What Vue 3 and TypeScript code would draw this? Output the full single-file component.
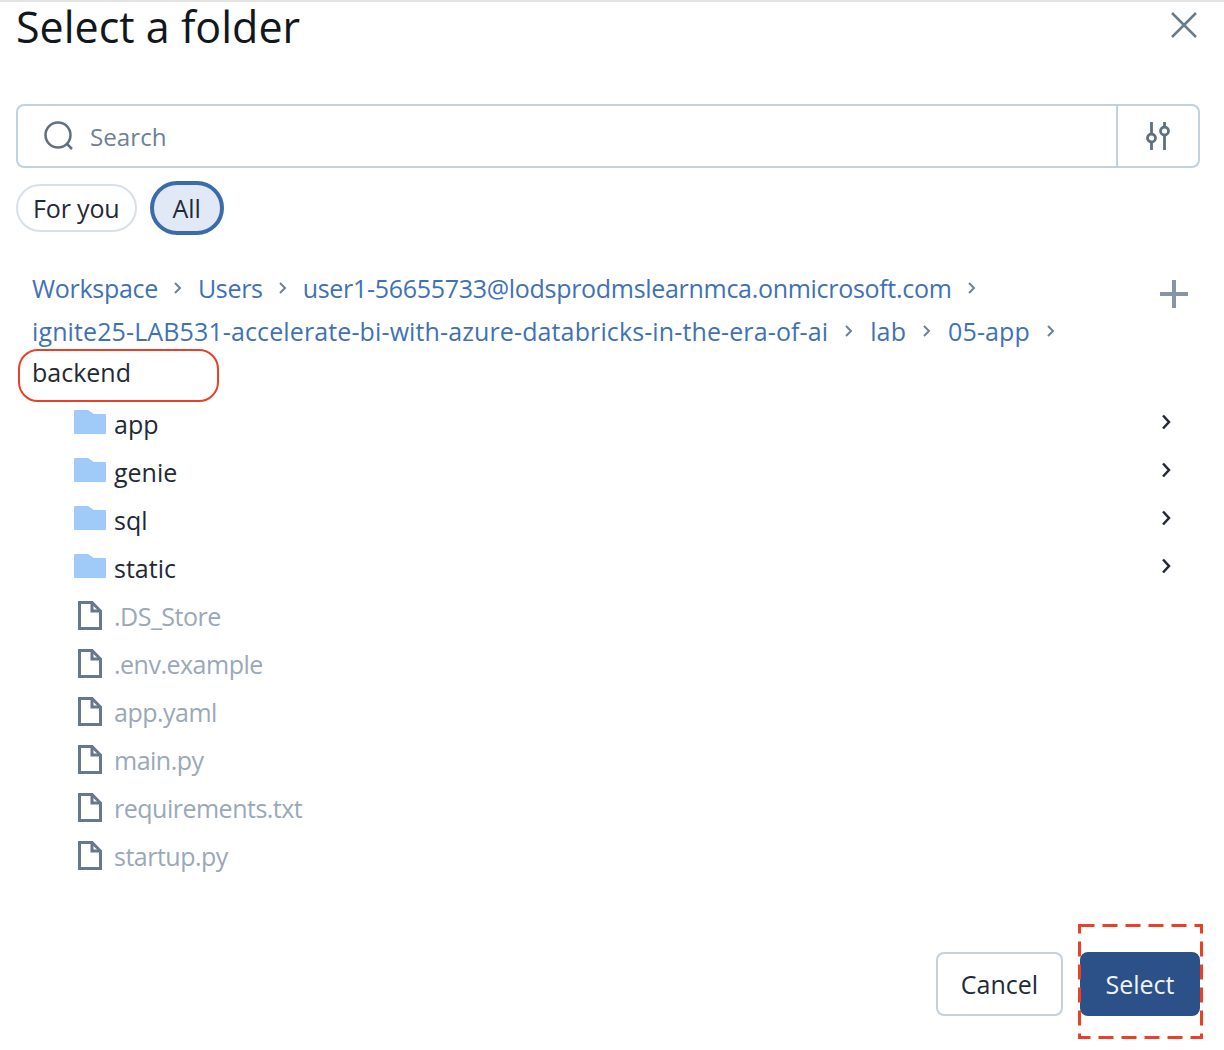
<script setup lang="ts">
const crumbs = [
  ['Workspace', 'Users', 'user1-56655733@lodsprodmslearnmca.onmicrosoft.com'],
  ['ignite25-LAB531-accelerate-bi-with-azure-databricks-in-the-era-of-ai', 'lab', '05-app'],
]
const folders = ['app', 'genie', 'sql', 'static']
const files = ['.DS_Store', '.env.example', 'app.yaml', 'main.py', 'requirements.txt', 'startup.py']
</script>

<template>
  <div class="dialog">
    <header class="head">
      <h1>Select a folder</h1>
      <svg class="close" width="28" height="28" viewBox="0 0 28 28" aria-label="Close">
        <path d="M2 2 L26 26 M26 2 L2 26" />
      </svg>
    </header>

    <div class="search">
      <div class="search-main">
        <svg width="32" height="32" viewBox="0 0 32 32">
          <circle cx="15" cy="15" r="12.5" />
          <path d="M24 24 L29 29" />
        </svg>
        <span>Search</span>
      </div>
      <div class="search-filter">
        <svg width="26" height="30" viewBox="0 0 26 30">
          <path d="M6.5 1 V13 M6.5 21 V29 M19.5 1 V6 M19.5 14 V29" />
          <circle cx="6.5" cy="17" r="4" />
          <circle cx="19.5" cy="10" r="4" />
        </svg>
      </div>
    </div>

    <div class="chips">
      <button class="chip">For you</button>
      <button class="chip active">All</button>
    </div>

    <div class="crumbs">
      <div class="crumb-lines">
        <div v-for="(line, i) in crumbs" :key="i" class="crumb-line" :class="i === 0 ? 'tight' : 'loose'">
          <template v-for="c in line" :key="c">
            <a>{{ c }}</a>
            <svg class="sep" width="10" height="14" viewBox="0 0 10 14"><path d="M2 2 L7 7 L2 12" /></svg>
          </template>
        </div>
        <div class="current">
          backend
          <span class="ring"></span>
        </div>
      </div>
      <svg class="plus" width="28" height="28" viewBox="0 0 28 28"><path d="M14 0 V28 M0 14 H28" /></svg>
    </div>

    <ul class="tree">
      <li v-for="f in folders" :key="f" class="row">
        <svg class="folder" width="32" height="24" viewBox="0 0 32 24">
          <path d="M0 1 Q0 0 1 0 H14 L20 4 H31 Q32 4 32 5 V23 Q32 24 31 24 H1 Q0 24 0 23 Z" />
        </svg>
        <span class="name">{{ f }}</span>
        <svg class="chev" width="10" height="16" viewBox="0 0 10 16"><path d="M2 1.5 L8 8 L2 14.5" /></svg>
      </li>
      <li v-for="f in files" :key="f" class="row file">
        <svg class="doc" width="32" height="30" viewBox="0 0 32 30">
          <path d="M5.5 2.5 H18 L26.5 11 V28.5 H5.5 Z" />
          <path d="M18 2.5 V11 H26.5" />
        </svg>
        <span class="name">{{ f }}</span>
      </li>
    </ul>

    <footer class="foot">
      <button class="btn">Cancel</button>
      <button class="btn primary">
        Select
        <svg class="dash" width="125" height="115" viewBox="0 0 125 115">
          <rect x="1.5" y="1.5" width="122" height="112" />
        </svg>
      </button>
    </footer>
  </div>
</template>

<style>
html, body { background: #fff; }
</style>

<style scoped>
.dialog {
  width: 1224px;
  height: 1050px;
  box-sizing: border-box;
  border-top: 2px solid #e4e4e4;
  padding: 0 24px 0 16px;
  background: #fff;
  font-family: "Open Sans", "Noto Sans", sans-serif;
  font-size: 25px;
  color: #1f2937;
  overflow: hidden;
}
.head {
  display: flex;
  justify-content: space-between;
  height: 102px;
}
h1 {
  margin: 0;
  font-size: 43px;
  line-height: 50px;
  font-weight: 400;
  color: #11171c;
}
.close { margin: 9px 2px 0 0; }
.close path { stroke: #6b7b8c; stroke-width: 2.5; fill: none; }
.search {
  display: flex;
  height: 64px;
  box-sizing: border-box;
  border: 2px solid #c3d0e0;
  border-radius: 8px;
}
.search-main {
  flex: 1;
  display: flex;
  align-items: center;
  gap: 15px;
  padding-left: 25px;
  color: #6f8194;
  font-size: 24.2px;
}
.search-main svg { fill: none; stroke: #5f7080; stroke-width: 2.5; }
.search-filter {
  width: 80px;
  border-left: 2px solid #c3d0e0;
  display: flex;
  align-items: center;
  justify-content: center;
}
.search-filter svg { fill: none; stroke: #5f7080; stroke-width: 2.8; }
.chips {
  display: flex;
  align-items: center;
  gap: 13px;
  height: 54px;
  margin-top: 13px;
}
.chip {
  font: inherit;
  height: 48px;
  padding: 0 15px;
  border: 2px solid #d8e0ea;
  border-radius: 24px;
  background: #fff;
  color: #1f2937;
  letter-spacing: -0.15px;
}
.chip.active {
  height: 54px;
  padding: 0 19px;
  border: 4px solid #3a6cad;
  border-radius: 27px;
  background: #e0e9f5;
  letter-spacing: 0;
}
.crumbs {
  display: flex;
  justify-content: space-between;
  padding: 31px 0 0 16px;
}
.crumb-line {
  display: flex;
  align-items: center;
  gap: 16px;
  height: 44px;
}
.crumb-line.tight { letter-spacing: -0.3px; gap: 15px; height: 43px; }
.crumb-line.loose { letter-spacing: 0.12px; }
.crumb-line a { color: #3f72b4; }
.sep { fill: none; stroke: #6f8194; stroke-width: 2; }
.current {
  position: relative;
  height: 38px;
  line-height: 38px;
  color: #1f2937;
}
.ring {
  position: absolute;
  left: -14px;
  top: -4px;
  width: 201px;
  height: 53px;
  box-sizing: border-box;
  border: 2px solid #e8412a;
  border-radius: 20px;
}
.plus {
  margin: 14px 12px 0 0;
}
.plus path { stroke: #8795a6; stroke-width: 4; fill: none; }
.tree {
  list-style: none;
  margin: 9px 0 0;
  padding: 0 0 0 58px;
}
.row {
  display: flex;
  align-items: center;
  gap: 8px;
  height: 48px;
}
.folder { fill: #a0caf8; margin-top: -4px; }
.name { flex: 1; }
.chev {
  fill: none;
  stroke: #1f2937;
  stroke-width: 2.5;
  margin: -4px 29px 0 0;
}
.file { color: #9aa8b8; letter-spacing: -0.5px; }
.doc { fill: none; stroke: #66788a; stroke-width: 3; margin-top: -3px; }
.foot {
  display: flex;
  justify-content: flex-end;
  gap: 17px;
  margin-top: 72px;
}
.btn {
  position: relative;
  font: inherit;
  width: 127px;
  height: 64px;
  border: 2px solid #c3d0e0;
  border-radius: 8px;
  background: #fff;
  color: #1f2937;
}
.btn.primary {
  width: 120px;
  background: #2c5088;
  border-color: #2c5088;
  color: #eef3fa;
}
.dash {
  position: absolute;
  left: -4px;
  top: -30px;
  fill: none;
  stroke: #ea4126;
  stroke-width: 3;
  stroke-dasharray: 15 8;
}
</style>
